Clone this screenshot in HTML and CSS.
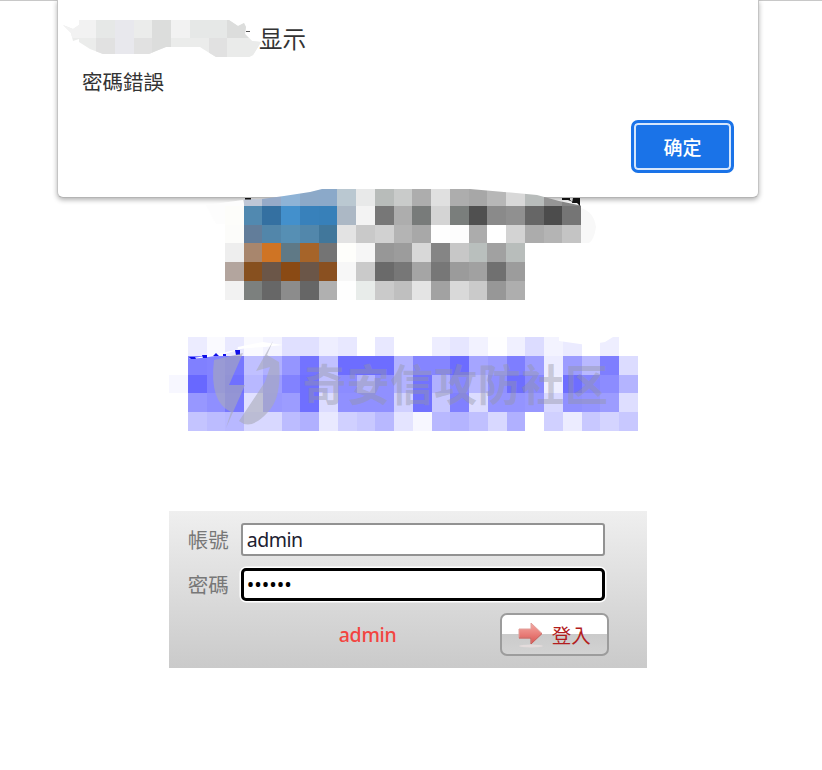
FILE: index.html
```
<!DOCTYPE html>
<html lang="zh-Hant">
<head>
<meta charset="utf-8">
<title>登入</title>
<link rel="stylesheet" href="styles.css">
</head>
<body>
<div class="dialog">
  <div class="dialog-title"><svg class="redacted" width="194" height="42" viewBox="0 0 194 42">
    <defs><clipPath id="blob"><path d="M-3 8l10 4 6-4V3h150l9 6 6-3 2 4-1 7 7 7 9 1-8 13-4 2h-33l-13-8-3-2h-34l-10 4-7 3H37l-13-5-11-7v-3l-6 2-2-8z"/></clipPath></defs>
    <g clip-path="url(#blob)">
      <path fill="#ebeceb" d="M-3 0h200v42H-3z"/>
      <path fill="#f2f2f2" d="M-3 0h33v21H-3zM105 0h19v21h-19z"/>
      <path fill="#e6e8e7" d="M30 0h19v21H30zM124 0h37v21h-37z"/>
      <path fill="#e8e8ed" d="M49 0h19v42H49z"/>
      <path fill="#dcdddc" d="M86 0h19v42H86zM161 0h23v21h-23z"/>
      <path fill="#e1e1e1" d="M30 21h19v21H30zM68 21h18v21H68zM143 21h18v21h-18z"/>
      <path fill="#eaebea" d="M161 21h36v21h-36z"/>
    </g>
    <path d="M180 14.500h4" stroke="#555"/>
  </svg><span>显示</span></div>
  <div class="dialog-message">密碼錯誤</div>
  <div class="dialog-actions"><button class="confirm" type="button">确定</button></div>
</div>
<main>
  <svg class="logo" width="412.5" height="112.5" viewBox="0 0 412.5 112.5">
    <defs><clipPath id="logoclip"><path d="M0 13L56 12 78 9 104 5 116 2h148l34 3 33 3 22 6 24 5v94H0z"/></clipPath></defs>
    <path fill="#f8f8f8" d="M375 21q13 4 15 19-2 13-7 16h-8z"/>
    <path fill="#fdfdfd" d="M0 18l37-5v24H10z"/>
    <g id="logo-cells" clip-path="url(#logoclip)"></g>
    <path fill="#111" d="M39 11h6v1.500h-6zM356 11h8v2l3 2-5-2h-6zM367 11h7v8l-3-3h-5z"/>
  </svg>
  <svg class="banner" width="468.75" height="93.75" viewBox="0 0 468.75 93.75">
    <g id="banner-cells"></g>
    <path fill="#fff" d="M18.750 22q27-1 50-9v-3l25-5 20 3-18 2q-27 1-42 6l-35 6zM390 0h54l-8 5-18 3-28-4z"/>
    <path fill="#1010e8" d="M20 20h6l1 2h-5zM33 18h5v3h-4zM44 19l3-3 3 3zM54 17h3v2h-3zM66 13h5v5h-4z"/>
    <g fill="#a8aab8" fill-opacity=".6">
      <path d="M45 23L74 16 60 48h16L57 91l5-16Q40 65 45 23z"/>
      <path d="M104 4L87 34l14-4-5 15-26 39q12 10 29-9 14-14 11-50l-12-7z"/>
    </g>
    <text x="134" y="64" class="watermark" textLength="305">奇安信攻防社区</text>
  </svg>
  <form class="login">
    <label class="row"><span>帳號</span><input type="text" value="admin"></label>
    <label class="row"><span>密碼</span><input class="focused" type="password" value="123456"></label>
    <div class="submit-row">
      <span class="notice">admin</span>
      <button class="submit" type="button">
        <svg width="29" height="27" viewBox="0 0 29 27">
          <defs><linearGradient id="red" x2="0" y2="1"><stop stop-color="#f5aaa4"/><stop offset=".5" stop-color="#e9807b"/><stop offset="1" stop-color="#d95552"/></linearGradient></defs>
          <ellipse cx="14" cy="25" rx="12" ry="1.500" fill="#e4dcdc"/>
          <path d="M2 8h12V2l11 10.500L14 23v-6H2z" fill="url(#red)" stroke="#e0a09b"/>
          <path d="M2 17h12v6l11-10.500" stroke="#c55a56" fill="none"/>
        </svg><span>登入</span>
      </button>
    </div>
  </form>
</main>
<script src="mosaic.js"></script>
</body>
</html>
```
FILE: styles.css
```
* { box-sizing: border-box; }
body {
  margin: 0;
  height: 770px;
  overflow: hidden;
  background: #fff;
  border-top: 1px solid #c8c8c8;
  font-family: "Noto Sans", "Noto Sans CJK TC", sans-serif;
}
.dialog {
  position: absolute;
  top: 0;
  left: 57px;
  width: 702px;
  height: 198px;
  background: #fff;
  border: 1px solid #c4c4c4;
  border-top: 0;
  border-bottom-color: #b4b4b4;
  border-radius: 0 0 6px 6px;
  box-shadow: 0 2px 5px rgba(0, 0, 0, .3);
  font-family: "Noto Sans CJK SC", sans-serif;
  color: #333;
}
.dialog-title {
  display: flex;
  align-items: center;
  padding: 15px 0 0 8px;
  height: 60px;
  font-size: 23.5px;
}
.dialog-title span { margin-left: -1px; }
.dialog-message {
  padding-left: 24px;
  font-family: "Noto Sans CJK TC", sans-serif;
  font-size: 20.5px;
  line-height: 42px;
}
.dialog-actions {
  display: flex;
  justify-content: flex-end;
  padding: 18px 24px 0 0;
}
.confirm {
  width: 103px;
  height: 53px;
  padding: 0;
  border: 3px solid #1a73e8;
  border-radius: 7px;
  background: #1a73e8;
  box-shadow: inset 0 0 0 2px #d5e6fc;
  color: #fff;
  font: 500 19px/1 "Noto Sans CJK SC", sans-serif;
}
main {
  display: flex;
  flex-direction: column;
  padding: 186px 0 0 168.75px;
}
.logo, .banner { position: relative; display: block; }
.logo { margin-left: 37.5px; }
.banner { margin-top: 37.5px; }
.redacted { flex: none; overflow: visible; }
.watermark {
  font: 700 43px "Noto Sans CJK SC", sans-serif;
  fill: #9495a2;
  fill-opacity: .42;
}
.login {
  width: 478px;
  height: 157px;
  margin-top: 80px;
  padding: 12px 38px 0 19px;
  background: linear-gradient(#efefef, #cacaca);
}
.row {
  display: flex;
  align-items: center;
  height: 33px;
  margin-bottom: 12px;
  color: #777;
  font-size: 20.5px;
}
.row span { width: 53px; flex: none; }
.row input {
  width: 364px;
  height: 33px;
  padding: 0 4px;
  border: 2px solid #929292;
  border-radius: 3px;
  outline: 0;
  background: #fff;
  color: #202030;
  font: 19.5px "Noto Sans", sans-serif;
  letter-spacing: -.5px;
}
.row .focused {
  border: 3px solid #000;
  border-radius: 5px;
  box-shadow: 0 0 0 1.5px #fff;
  padding: 0 3px;
  color: #000;
  font-size: 20px;
  letter-spacing: 0;
}
.submit-row { display: flex; align-items: center; }
.notice {
  flex: none;
  width: 312px;
  padding-left: 151px;
  color: #f34440;
  font-size: 19.5px;
  font-weight: 500;
  letter-spacing: -.3px;
}
.submit {
  display: flex;
  flex: none;
  align-items: center;
  width: 109px;
  height: 43px;
  padding: 0 0 0 15px;
  border: 2px solid #9c9c9c;
  border-radius: 7px;
  background: linear-gradient(#fff 0 48%, #cbcbcb 50%, #d2d2d2);
  color: #b31d1d;
  font: 19.5px/1 "Noto Sans CJK TC", sans-serif;
}
.submit span { margin-left: 6px; }
```
FILE: mosaic.js
```
const CELL = 18.75;

const logo = [
  "- - bfc7d6 96aac8 8eb3d6 8ca9c8 8ba9c9 bac8d1 e8e9e9 b8bcba c9cbca adadad e0e0e0 adadad a7a7a7 b7b7b7 d8d8d8 b8bcbb 959595 858585",
  "- fdfdfa 5189b0 3470a1 4390cc 3881bb 3780b9 acb8c5 f3f3f3 777777 adadad 787b7a d4d4d4 7a7e7c 505050 8a8a8a 909090 666666 4c4c4c 757575",
  "- fcfcfa 627d9a 5286aa 568fb4 5287ab 41779b e3e3e3 c9c9c9 d1d1d1 b4b4b4 a8a8a8 fefefe fdfdfd acacac ffffff d3d3d3 acacac b4b4b4 c4c4c4",
  "- eeeeee a8866d cf7424 5f7986 a66429 747474 fefefb f6f6f6 979797 9c9c9c d8d8d8 858585 c7c7c7 b9bfbd a1a1a1 b8bdbb",
  "- b3a59e 87501f 6b5648 8a4a14 6b5648 8a5020 f7f7f7 cacaca 6a6a6a 777777 a5a5a5 777777 9b9b9b a1a1a1 707070 9c9c9c",
  "- f2f2f2 7c807e 676767 8c8c8c 666666 b0b0b0 fefefe e8ecea cacaca bfbfbf e4e4e4 a2a2a2 d9d9d9 cacaca 979797 aeaeae"
].map(r => r.split(" ").map(c => c === "-" ? null : "#" + c));

/* The banner is a single blue hue: each value is the shared red and green level. */
const banner = [
  "- ec fa e9 fa f3 e0 e0 ee e8 ff e8 ff ff ed e6 f2 fe f0 dc f3 eb ff ee ff",
  "- 80 83 77 c0 b0 95 73 c1 6d 6d 6d b2 85 85 6c a5 9c 7e 9c ec 9c b9 7e dc",
  "f7 68 82 70 b8 9c 82 6f c0 8c b4 90 b2 72 b0 88 b8 90 6e 88 ee 6e 85 8c b4",
  "- 97 8f 77 e0 98 9c 6f dc 90 90 90 d0 72 c8 80 dc 94 94 98 d8 90 94 9c de",
  "- c4 bc b8 d8 d8 bc b0 e9 d0 c8 b8 e4 f7 b8 b4 c0 d8 b0 ff d0 ec c8 d4 c8"
].map(r => r.split(" ").map(c => c === "-" ? null : "#" + c + c + "ff"));

function paint(id, rows) {
  const group = document.getElementById(id);
  rows.forEach((row, y) => row.forEach((color, x) => {
    if (!color) return;
    const rect = document.createElementNS("http://www.w3.org/2000/svg", "rect");
    rect.setAttribute("x", x * CELL);
    rect.setAttribute("y", y * CELL);
    rect.setAttribute("width", CELL);
    rect.setAttribute("height", CELL);
    rect.setAttribute("fill", color);
    rect.setAttribute("shape-rendering", "crispEdges");
    group.append(rect);
  }));
}

paint("logo-cells", logo);
paint("banner-cells", banner);
```
